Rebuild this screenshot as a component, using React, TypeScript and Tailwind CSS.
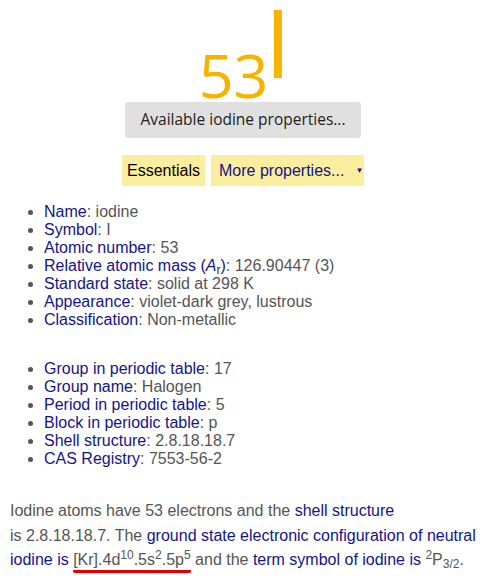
import React from "react";

const link = "text-[#14148c]";
const value = "text-[#555555]";

type Prop = { label: React.ReactNode; value: React.ReactNode };

const essentials: Prop[] = [
  { label: "Name", value: "iodine" },
  { label: "Symbol", value: "I" },
  { label: "Atomic number", value: "53" },
  {
    label: (
      <>
        Relative atomic mass (<i>A</i>
        <sub>r</sub>)
      </>
    ),
    value: "126.90447 (3)",
  },
  { label: "Standard state", value: "solid at 298 K" },
  { label: "Appearance", value: "violet-dark grey, lustrous" },
  { label: "Classification", value: "Non-metallic" },
];

const table: Prop[] = [
  { label: "Group in periodic table", value: "17" },
  { label: "Group name", value: "Halogen" },
  { label: "Period in periodic table", value: "5" },
  { label: "Block in periodic table", value: "p" },
  { label: "Shell structure", value: "2.8.18.18.7" },
  { label: "CAS Registry", value: "7553-56-2" },
];

const PropList: React.FC<{ items: Prop[]; className?: string }> = ({
  items,
  className,
}) => (
  <ul
    className={`list-disc pl-[44px] text-[16px] leading-[18px] marker:text-[#555] ${className ?? ""}`}
  >
    {items.map((p, i) => (
      <li key={i}>
        <span className={link}>{p.label}</span>
        <span className={value}>: {p.value}</span>
      </li>
    ))}
  </ul>
);

const App: React.FC = () => {
  return (
    <div className="w-[486px] min-h-[585px] bg-white font-['Liberation_Sans',Arial,sans-serif]">
      <div className="flex h-[100px] justify-center pl-[4px] font-['Open_Sans',sans-serif] text-[#f6b400]">
        <span className="mt-[44px] text-[61px] leading-none">53</span>
        <span className="ml-[-4px] text-[96px] font-medium leading-[82px]">
          I
        </span>
      </div>

      <div className="mt-[2px] flex justify-center">
        <button className="h-[36px] w-[236px] rounded-[3px] bg-[#e0e0e0] font-['Open_Sans',sans-serif] text-[15.5px] text-[#222]">
          Available iodine properties...
        </button>
      </div>

      <div className="mt-[17px] flex justify-center gap-[6px] text-[16px]">
        <div className="flex h-[31px] w-[83px] items-center justify-center bg-[#fcee9f] text-black">
          Essentials
        </div>
        <div
          className={`flex h-[31px] w-[153px] items-center bg-[#fcee9f] pl-[8px] ${link}`}
        >
          More properties...
          <span className="ml-[11px] text-[8px]">▼</span>
        </div>
      </div>

      <PropList items={essentials} className="mt-[17px]" />
      <PropList items={table} className="mt-[31px]" />

      <p className={`mt-[31px] px-[10px] text-[16px] leading-[24.5px] ${value}`}>
        Iodine atoms have 53 electrons and the{" "}
        <span className={link}>shell structure</span>{" "}
        <span className="whitespace-nowrap">is 2.8.18.18.7.</span> The{" "}
        <span className={link}>
          ground state electronic configuration of neutral iodine is
        </span>{" "}
        <span className="rounded-[2px] border-b-[3px] border-[#e00000] pb-[2px]">
          [Kr].4d<sup>10</sup>.5s<sup>2</sup>.5p<sup>5</sup>
        </span>{" "}
        and the <span className={link}>term symbol of iodine is</span>{" "}
        <sup>2</sup>P<sub>3/2</sub>.
      </p>
    </div>
  );
};

export default App;
